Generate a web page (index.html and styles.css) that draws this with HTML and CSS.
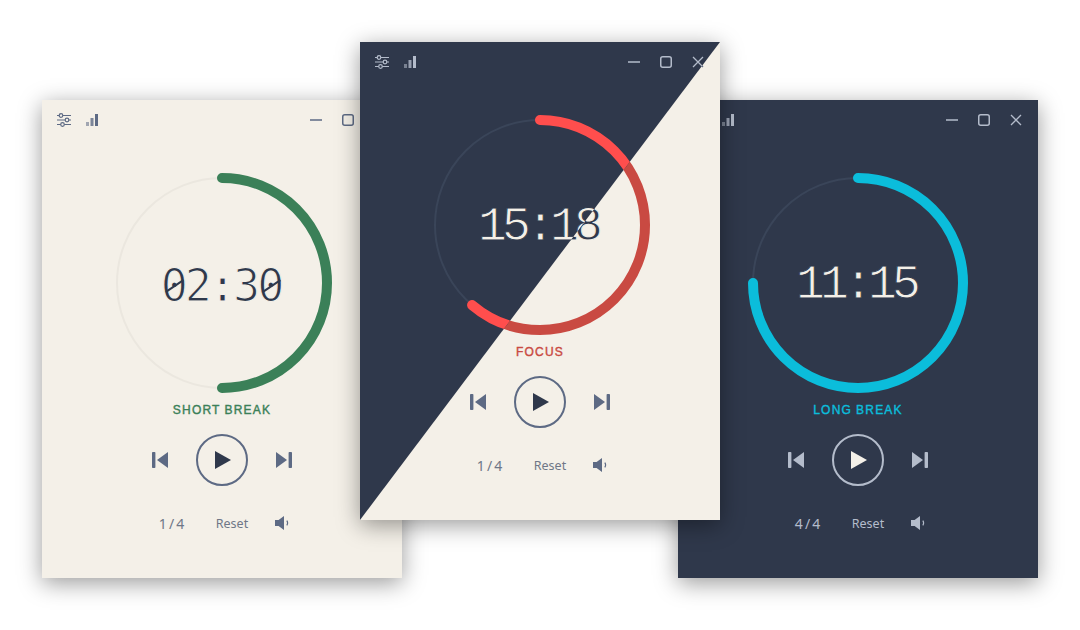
FILE: index.html
```html
<!DOCTYPE html>
<html lang="en">
<head>
    <meta charset="UTF-8">
    <title>Pomodoro timer themes</title>
    <link rel="stylesheet" href="styles.css">
</head>
<body>
    <!-- shared icons -->
    <svg class="icon-defs" aria-hidden="true">
        <symbol id="i-sliders" viewBox="0 0 14 14">
            <path d="M0 2.5h14M0 7h14M0 11.5h14" fill="none" stroke="currentColor" stroke-width="1.1"/>
            <circle cx="4" cy="2.5" r="1.8" fill="var(--bg)" stroke="currentColor" stroke-width="1.2"/>
            <circle cx="10" cy="7" r="1.8" fill="var(--bg)" stroke="currentColor" stroke-width="1.2"/>
            <circle cx="5.5" cy="11.5" r="1.8" fill="var(--bg)" stroke="currentColor" stroke-width="1.2"/>
        </symbol>
        <symbol id="i-bars" viewBox="0 0 12 12">
            <rect x="0" y="8" width="3" height="4" fill="currentColor" opacity=".55"/>
            <rect x="4.5" y="4" width="3" height="8" fill="currentColor" opacity=".8"/>
            <rect x="9" y="0" width="3" height="12" fill="currentColor"/>
        </symbol>
        <symbol id="i-min" viewBox="0 0 12 12">
            <path d="M0 6h12" fill="none" stroke="currentColor" stroke-width="1.5"/>
        </symbol>
        <symbol id="i-max" viewBox="0 0 12 12">
            <rect x=".75" y=".75" width="10.5" height="10.5" rx="2" fill="none" stroke="currentColor" stroke-width="1.5"/>
        </symbol>
        <symbol id="i-close" viewBox="0 0 12 12">
            <path d="M1 1l10 10M11 1L1 11" fill="none" stroke="currentColor" stroke-width="1.3"/>
        </symbol>
        <symbol id="i-prev" viewBox="0 0 16 16">
            <rect x="0" y="0" width="3.4" height="16" rx=".8" fill="currentColor"/>
            <path d="M16 0v16L5 8z" fill="currentColor"/>
        </symbol>
        <symbol id="i-next" viewBox="0 0 16 16">
            <rect x="12.6" y="0" width="3.4" height="16" rx=".8" fill="currentColor"/>
            <path d="M0 0v16l11-8z" fill="currentColor"/>
        </symbol>
        <symbol id="i-play" viewBox="0 0 16 18">
            <path d="M0 0v18l16-9z" fill="currentColor"/>
        </symbol>
        <symbol id="i-sound" viewBox="0 0 14 14">
            <path d="M0 4h3.6L9 0v14L3.6 10H0z" fill="currentColor"/>
            <path d="M11.8 4.6c1 1.5 1 3.3 0 4.8" fill="none" stroke="currentColor" stroke-width="1.2"/>
        </symbol>
    </svg>

    <!-- short break -->
    <section class="window window-left theme-cream mode-short">
        <div class="face">
            <div class="titlebar">
                <div class="titlebar-group">
                    <svg class="icon-sm"><use href="#i-sliders"/></svg>
                    <svg class="icon-bars"><use href="#i-bars"/></svg>
                </div>
                <div class="titlebar-group">
                    <svg class="icon-win"><use href="#i-min"/></svg>
                    <svg class="icon-win"><use href="#i-max"/></svg>
                    <svg class="icon-win"><use href="#i-close"/></svg>
                </div>
            </div>
            <div class="dial">
                <svg class="ring" viewBox="0 0 220 220">
                    <circle class="ring-track" cx="110" cy="110" r="105"/>
                    <circle class="ring-value" cx="110" cy="110" r="105" pathLength="100" stroke-dasharray="50 100" transform="rotate(-90 110 110)"/>
                </svg>
                <div class="time time-zeros"><span class="zero">0</span>2:3<span class="zero">0</span></div>
            </div>
            <div class="mode-label">SHORT BREAK</div>
            <div class="controls">
                <svg class="icon-skip"><use href="#i-prev"/></svg>
                <div class="play"><svg class="icon-play"><use href="#i-play"/></svg></div>
                <svg class="icon-skip"><use href="#i-next"/></svg>
            </div>
            <div class="meta">
                <span class="meta-count">1 / 4</span>
                <span class="meta-reset">Reset</span>
                <svg class="icon-sound"><use href="#i-sound"/></svg>
            </div>
        </div>
    </section>

    <!-- long break -->
    <section class="window window-right theme-dark mode-long">
        <div class="face">
            <div class="titlebar">
                <div class="titlebar-group">
                    <svg class="icon-sm"><use href="#i-sliders"/></svg>
                    <svg class="icon-bars"><use href="#i-bars"/></svg>
                </div>
                <div class="titlebar-group">
                    <svg class="icon-win"><use href="#i-min"/></svg>
                    <svg class="icon-win"><use href="#i-max"/></svg>
                    <svg class="icon-win"><use href="#i-close"/></svg>
                </div>
            </div>
            <div class="dial">
                <svg class="ring" viewBox="0 0 220 220">
                    <circle class="ring-track" cx="110" cy="110" r="105"/>
                    <circle class="ring-value" cx="110" cy="110" r="105" pathLength="100" stroke-dasharray="75 100" transform="rotate(-90 110 110)"/>
                </svg>
                <div class="time">11:15</div>
            </div>
            <div class="mode-label">LONG BREAK</div>
            <div class="controls">
                <svg class="icon-skip"><use href="#i-prev"/></svg>
                <div class="play"><svg class="icon-play"><use href="#i-play"/></svg></div>
                <svg class="icon-skip"><use href="#i-next"/></svg>
            </div>
            <div class="meta">
                <span class="meta-count">4 / 4</span>
                <span class="meta-reset">Reset</span>
                <svg class="icon-sound"><use href="#i-sound"/></svg>
            </div>
        </div>
    </section>

    <!-- focus: same window twice, the dark copy is clipped to the top-left triangle -->
    <section class="window window-center">
        <div class="face theme-cream mode-focus">
            <div class="titlebar">
                <div class="titlebar-group">
                    <svg class="icon-sm"><use href="#i-sliders"/></svg>
                    <svg class="icon-bars"><use href="#i-bars"/></svg>
                </div>
                <div class="titlebar-group">
                    <svg class="icon-win"><use href="#i-min"/></svg>
                    <svg class="icon-win"><use href="#i-max"/></svg>
                    <svg class="icon-win"><use href="#i-close"/></svg>
                </div>
            </div>
            <div class="dial">
                <svg class="ring" viewBox="0 0 220 220">
                    <circle class="ring-track" cx="110" cy="110" r="105"/>
                    <circle class="ring-value" cx="110" cy="110" r="105" pathLength="100" stroke-dasharray="61.2 100" transform="rotate(-90 110 110)"/>
                </svg>
                <div class="time">15:18</div>
            </div>
            <div class="mode-label">FOCUS</div>
            <div class="controls">
                <svg class="icon-skip"><use href="#i-prev"/></svg>
                <div class="play"><svg class="icon-play"><use href="#i-play"/></svg></div>
                <svg class="icon-skip"><use href="#i-next"/></svg>
            </div>
            <div class="meta">
                <span class="meta-count">1 / 4</span>
                <span class="meta-reset">Reset</span>
                <svg class="icon-sound"><use href="#i-sound"/></svg>
            </div>
        </div>
        <div class="face face-split theme-dark mode-focus" aria-hidden="true">
            <div class="titlebar">
                <div class="titlebar-group">
                    <svg class="icon-sm"><use href="#i-sliders"/></svg>
                    <svg class="icon-bars"><use href="#i-bars"/></svg>
                </div>
                <div class="titlebar-group">
                    <svg class="icon-win"><use href="#i-min"/></svg>
                    <svg class="icon-win"><use href="#i-max"/></svg>
                    <svg class="icon-win"><use href="#i-close"/></svg>
                </div>
            </div>
            <div class="dial">
                <svg class="ring" viewBox="0 0 220 220">
                    <circle class="ring-track" cx="110" cy="110" r="105"/>
                    <circle class="ring-value" cx="110" cy="110" r="105" pathLength="100" stroke-dasharray="61.2 100" transform="rotate(-90 110 110)"/>
                </svg>
                <div class="time">15:18</div>
            </div>
            <div class="mode-label">FOCUS</div>
            <div class="controls">
                <svg class="icon-skip"><use href="#i-prev"/></svg>
                <div class="play"><svg class="icon-play"><use href="#i-play"/></svg></div>
                <svg class="icon-skip"><use href="#i-next"/></svg>
            </div>
            <div class="meta">
                <span class="meta-count">1 / 4</span>
                <span class="meta-reset">Reset</span>
                <svg class="icon-sound"><use href="#i-sound"/></svg>
            </div>
        </div>
    </section>
</body>
</html>
```

FILE: styles.css
```css
body {
    margin: 0;
    width: 1080px;
    height: 630px;
    position: relative;
    overflow: hidden;
    background: #fff;
    font-family: "Noto Sans", sans-serif;
}
.icon-defs {
    position: absolute;
    width: 0;
    height: 0;
}

/* themes */
.theme-cream {
    --bg: #f4f0e8;
    --text: #2f384b;
    --muted: #5d6a84;
    --soft: #6f7787;
    --track: #ebe7df;
}
.theme-dark {
    --bg: #2f384b;
    --text: #f4f0e8;
    --muted: #b4bccb;
    --soft: #b4bccb;
    --track: #3a4559;
}
.mode-short { --accent: #3b8058; }
.mode-long { --accent: #0bbddb; }
.theme-cream.mode-focus { --accent: #c94a42; }
.theme-dark.mode-focus { --accent: #ff4e4d; }

/* windows sit on a free canvas */
.window {
    position: absolute;
    width: 360px;
    height: 478px;
    box-shadow: 0 5px 22px rgba(0,0,0,0.4);
}
.window-left { left: 42px; top: 100px; }
.window-right { left: 678px; top: 100px; }
.window-center { left: 360px; top: 42px; z-index: 2; }

.face {
    width: 360px;
    height: 478px;
    background: var(--bg);
    color: var(--text);
    display: flex;
    flex-direction: column;
    align-items: center;
}
.face-split {
    position: absolute;
    left: 0;
    top: 0;
    clip-path: polygon(0 0, 100% 0, 0 100%);
}

/* title bar */
.titlebar {
    width: 100%;
    height: 40px;
    box-sizing: border-box;
    padding: 0 16px 0 15px;
    display: flex;
    align-items: center;
    justify-content: space-between;
    color: var(--muted);
}
.titlebar-group {
    display: flex;
    align-items: center;
    gap: 15px;
}
.titlebar-group + .titlebar-group {
    gap: 20px;
}
.icon-sm {
    width: 14px;
    height: 14px;
}
.icon-bars,
.icon-win {
    width: 12px;
    height: 12px;
}

/* dial */
.dial {
    margin-top: 33px;
    width: 220px;
    height: 220px;
    display: grid;
    place-items: center;
}
.ring,
.time {
    grid-area: 1 / 1;
}
.ring {
    width: 220px;
    height: 220px;
}
.ring-track {
    fill: none;
    stroke: var(--track);
    stroke-width: 2;
}
.ring-value {
    fill: none;
    stroke: var(--accent);
    stroke-width: 10;
    stroke-linecap: round;
}
.time {
    font-family: "Liberation Mono", monospace;
    font-size: 48px;
    letter-spacing: -4.8px;
    line-height: 1;
    margin: 4px 4px 0 0;
    -webkit-text-stroke: 0.9px var(--bg);
}
/* Liberation Mono has a dotted zero, the reference a slashed one */
.time-zeros {
    font-family: "DejaVu Sans Mono", monospace;
    font-size: 45px;
    letter-spacing: -3px;
    margin: 4px 2px 0 0;
    -webkit-text-stroke: 1.2px var(--bg);
}
.zero {
    position: relative;
    display: inline-block;
}
.zero::after {
    content: "";
    position: absolute;
    left: 3.5px;
    top: 22px;
    width: 21px;
    height: 1.5px;
    background: var(--text);
    transform: rotate(-34deg);
}

.mode-label {
    margin-top: 9px;
    height: 16px;
    line-height: 16px;
    font-family: "Liberation Sans", sans-serif;
    font-size: 12px;
    letter-spacing: 1.2px;
    word-spacing: -0.5px;
    -webkit-text-stroke: 0.4px var(--accent);
    color: var(--accent);
}

/* playback */
.controls {
    margin-top: 16px;
    display: flex;
    align-items: center;
    gap: 28px;
    color: var(--muted);
}
.icon-skip {
    width: 16px;
    height: 16px;
}
.play {
    width: 52px;
    height: 52px;
    box-sizing: border-box;
    border: 2px solid var(--muted);
    border-radius: 50%;
    display: flex;
    align-items: center;
    justify-content: center;
    color: var(--text);
}
.icon-play {
    width: 16px;
    height: 18px;
    margin-left: 2px;
}

/* bottom row */
.meta {
    margin-top: 27px;
    display: grid;
    grid-template-columns: 40px 80px 20px;
    justify-items: center;
    align-items: center;
    height: 20px;
    font-size: 12.5px;
    color: var(--soft);
}
.meta-count {
    font-size: 14px;
    word-spacing: -1.5px;
    margin-right: 1px;
}
.icon-sound {
    width: 14px;
    height: 14px;
    color: var(--muted);
}
```
